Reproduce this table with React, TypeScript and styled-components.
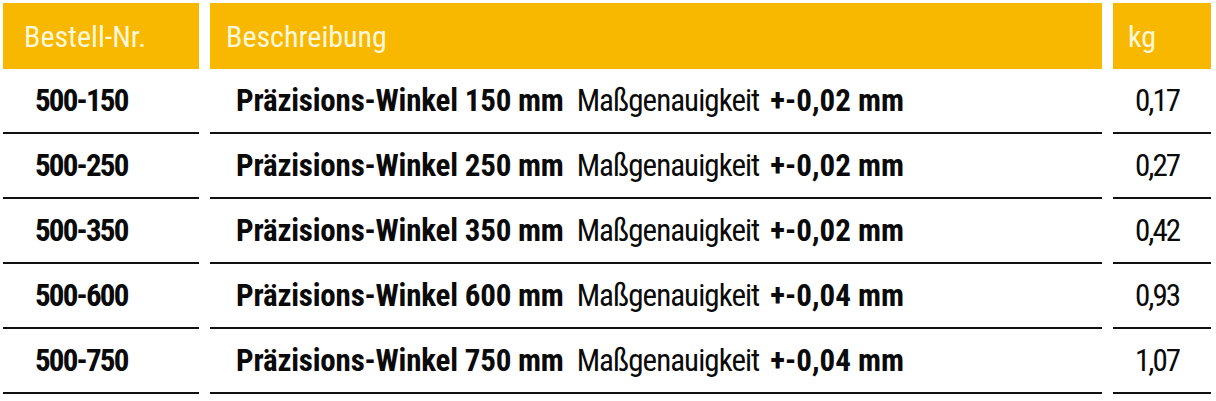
import React from "react";
import styled, { createGlobalStyle } from "styled-components";

const Global = createGlobalStyle`
  html, body { margin: 0; padding: 0; background: #ffffff; }
  body {
    font-family: "Roboto Condensed", "Liberation Sans Narrow", "DejaVu Sans Condensed", Roboto, sans-serif;
    font-stretch: condensed;
  }
`;

const Table = styled.div`
  display: grid;
  grid-template-columns: 196px 892px 98px;
  column-gap: 11px;
  padding: 3px 0 0 3px;
  width: 1211px;
`;

const HeadCell = styled.div<{ $pad: number }>`
  background: #f9b800;
  color: #fff7dc;
  height: 66px;
  display: flex;
  align-items: center;
  padding-left: ${(p) => p.$pad}px;
  font-size: 30px;
  font-weight: 400;
  box-sizing: border-box;
`;

const Cell = styled.div<{ $pad: number; $align?: "left" | "center" }>`
  height: 65px;
  box-sizing: border-box;
  border-bottom: 2px solid #111111;
  display: flex;
  align-items: center;
  justify-content: ${(p) => (p.$align === "center" ? "center" : "flex-start")};
  padding-left: ${(p) => p.$pad}px;
  padding-right: ${(p) => (p.$align === "center" ? 10 : 0)}px;
  font-size: 31px;
  color: #0a0a0a;
  white-space: nowrap;
`;

const B = styled.span<{ $ls?: number }>`
  font-weight: 700;
  letter-spacing: ${(p) => p.$ls ?? 0}px;
`;

const N = styled.span<{ $ls?: number }>`
  font-weight: 400;
  letter-spacing: ${(p) => p.$ls ?? 0}px;
`;

const Middle = styled(N)`
  margin: 0 11px 0 13px;
`;

const rows = [
  { nr: "500-150", len: "150", tol: "0,02", kg: "0,17" },
  { nr: "500-250", len: "250", tol: "0,02", kg: "0,27" },
  { nr: "500-350", len: "350", tol: "0,02", kg: "0,42" },
  { nr: "500-600", len: "600", tol: "0,04", kg: "0,93" },
  { nr: "500-750", len: "750", tol: "0,04", kg: "1,07" },
];

export default function App() {
  return (
    <>
      <Global />
      <Table>
        <HeadCell $pad={21}>Bestell-Nr.</HeadCell>
        <HeadCell $pad={16}>Beschreibung</HeadCell>
        <HeadCell $pad={15}>kg</HeadCell>
        {rows.map((r) => (
          <React.Fragment key={r.nr}>
            <Cell $pad={32}>
              <B $ls={-1.8}>{r.nr}</B>
            </Cell>
            <Cell $pad={26}>
              <B $ls={-0.2}>Präzisions-Winkel {r.len} mm</B>
              <Middle $ls={-0.95}>Maßgenauigkeit</Middle>
              <B>+-{r.tol} mm</B>
            </Cell>
            <Cell $pad={0} $align="center">
              <N $ls={-2}>{r.kg}</N>
            </Cell>
          </React.Fragment>
        ))}
      </Table>
    </>
  );
}
